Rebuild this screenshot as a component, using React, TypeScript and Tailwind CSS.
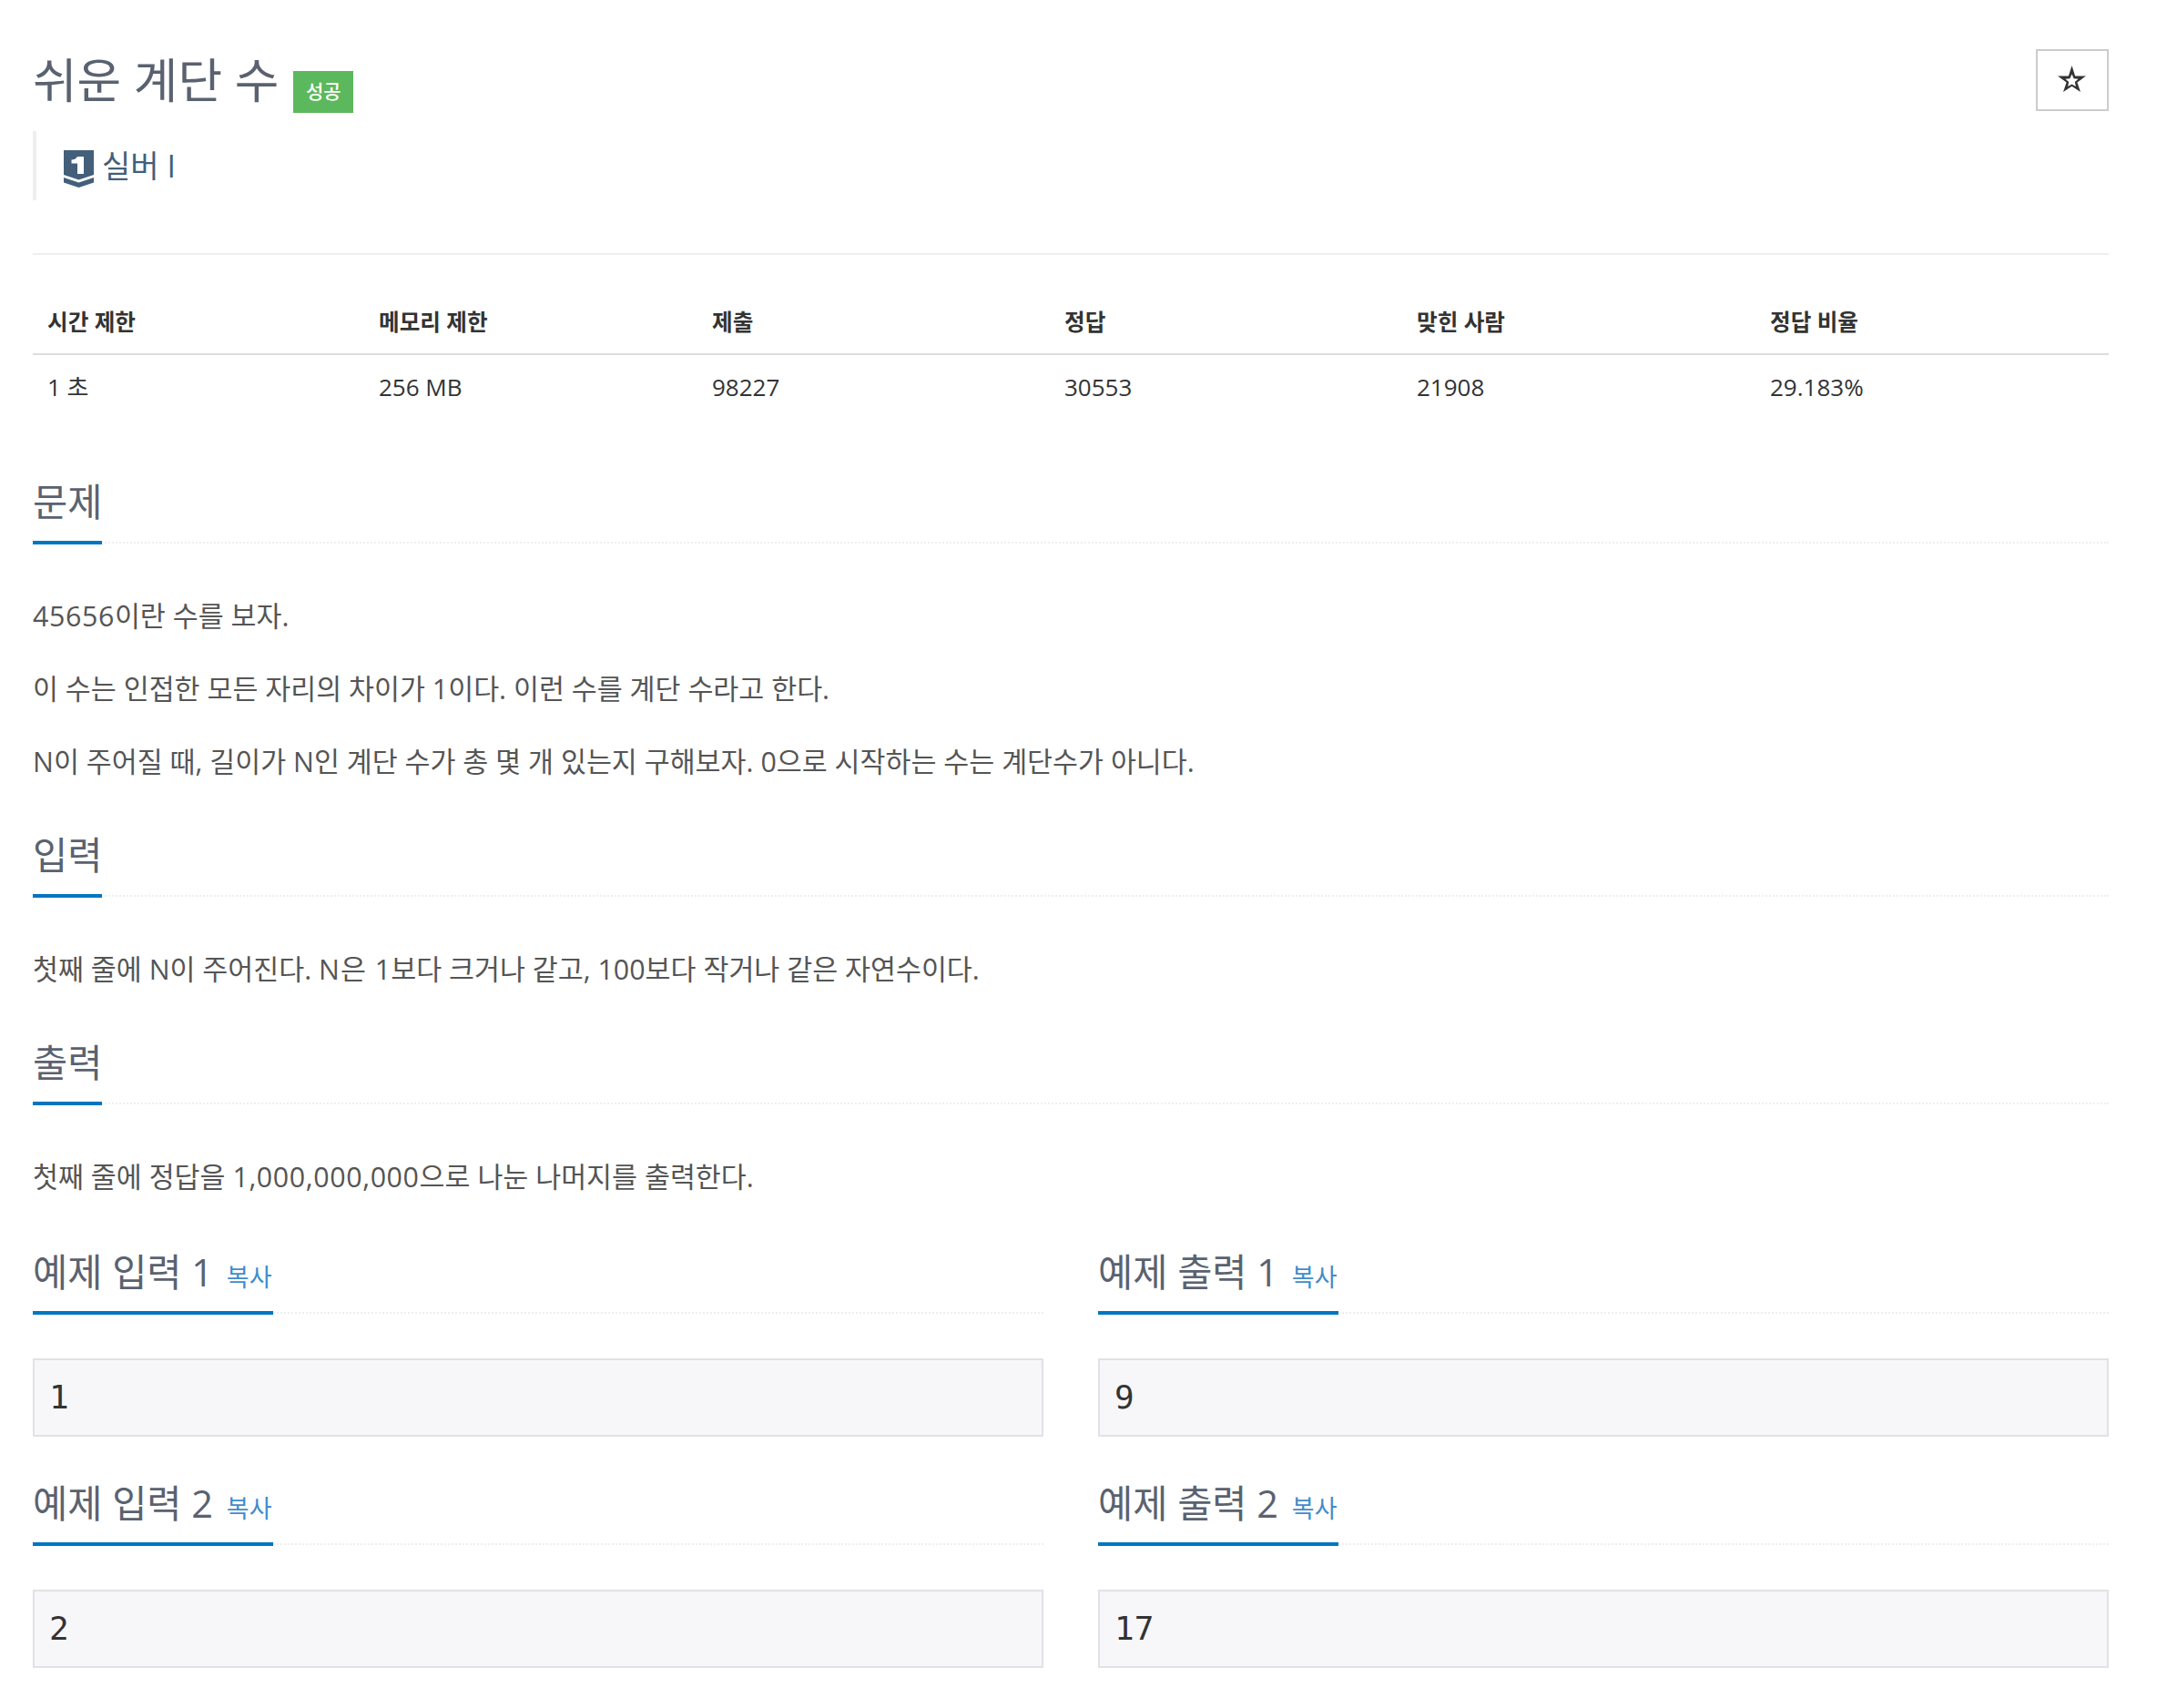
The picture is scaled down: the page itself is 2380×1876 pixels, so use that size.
import React from 'react';

const stats = [
  { head: '시간 제한', value: '1 초' },
  { head: '메모리 제한', value: '256 MB' },
  { head: '제출', value: '98227' },
  { head: '정답', value: '30553' },
  { head: '맞힌 사람', value: '21908' },
  { head: '정답 비율', value: '29.183%' },
];

const Headline: React.FC<{ children: React.ReactNode; className?: string }> = ({ children, className = '' }) => (
  <div className={`h-[72px] border-b-2 border-dotted border-[#eeeeee] ${className}`}>
    <h2 className="inline-block h-[73px] border-b-4 border-[#0076c0] text-[41.500px] leading-[52px] font-normal text-[#5a6270]">
      {children}
    </h2>
  </div>
);

const Sample: React.FC<{ title: string; value: string }> = ({ title, value }) => (
  <div>
    <Headline>
      {title} <a className="mr-[2px] ml-[4px] text-[27px] text-[#428bca]">복사</a>
    </Headline>
    <pre className="mt-[49px] flex h-[86px] items-center border-2 border-[#e1e1e8] bg-[#f7f7f9] pl-[16px] font-['DejaVu_Sans_Mono','Liberation_Mono',monospace] text-[36px] text-[#333333]">
      {value}
    </pre>
  </div>
);

export default function App() {
  return (
    <div className="min-h-[1876px] bg-white pt-[54px] pr-[64px] pl-[36px] font-['Open_Sans','Noto_Sans_CJK_KR',sans-serif] text-[30.400px] text-[#555555]">
      <div className="flex h-[90px] items-start justify-between">
        <div className="flex items-start">
          <h1 className="text-[52.800px] leading-[68px] font-normal text-[#5a6270]">쉬운 계단 수</h1>
          <span className="mt-[24px] ml-[16px] flex h-[46px] w-[66px] items-center justify-center bg-[#5cb85c] text-[21px] font-medium text-white">
            성공
          </span>
        </div>
        <button className="flex h-[68px] w-[80px] items-center justify-center border-2 border-[#cccccc] bg-white">
          <svg width="31" height="29" viewBox="0 0 31 29" className="-mt-[3px] -ml-[2px]">
            <path
              fillRule="evenodd"
              fill="#333333"
              d="M15.500 0l3.600 11.500H31l-9.600 6.900L25 29l-9.500-6.300L6 29l3.600-10.600L0 11.500h11.900zM15.500 9.500l-2.100 4.700-5 .5 3.800 3.400-1.100 4.900 4.400-2.500 4.400 2.500-1.100-4.900 3.800-3.400-5-.5z"
            />
          </svg>
        </button>
      </div>

      <blockquote className="flex h-[76px] items-start border-l-4 border-[#eeeeee] pt-[21px] pl-[30px]">
        <svg width="33" height="41" viewBox="0 0 33 41" className="shrink-0">
          <path d="M0 0h33v27l-16.500 5.500L0 27z" fill="#435f7a" />
          <path d="M0 30l16.500 5.500L33 30v5.500L16.500 41 0 35.500z" fill="#435f7a" />
          <path d="M15 7h7v19h-7V14.500H8.500v-4c3 0 5-1 6.500-3.500z" fill="#ffffff" />
        </svg>
        <span className="-mt-[3px] ml-[9px] text-[34px] leading-[40px] text-[#435f7a]">실버 I</span>
      </blockquote>

      <div className="mt-[58px] h-[2px] bg-[#eeeeee]" />

      <div className="mt-[54px] grid grid-cols-[364px_366px_387px_387px_388px_388px] border-b-2 border-[#dddddd] pb-[14px] text-[24.600px] leading-[40px] font-bold text-[#333333]">
        {stats.map(s => (
          <div key={s.head} className="pl-[16px]">{s.head}</div>
        ))}
      </div>
      <div className="mt-[15px] grid grid-cols-[364px_366px_387px_387px_388px_388px] text-[26px] leading-[40px] text-[#333333]">
        {stats.map(s => (
          <div key={s.head} className="pl-[16px]">{s.value}</div>
        ))}
      </div>

      <Headline className="mt-[80px]">문제</Headline>
      <div className="mt-[60px] leading-[40px]">
        <p><span className="tracking-[0.600px]">45656</span>이란 수를 보자.</p>
        <p className="mt-[40px]">이 수는 인접한 모든 자리의 차이가 1이다. 이런 수를 계단 수라고 한다.</p>
        <p className="mt-[40px]">N이 주어질 때, 길이가 N인 계단 수가 총 몇 개 있는지 구해보자. 0으로 시작하는 수는 계단수가 아니다.</p>
      </div>

      <Headline className="mt-[56px]">입력</Headline>
      <p className="mt-[60px] leading-[40px]">
        첫째 줄에 N이 주어진다. <span className="tracking-[1px]">N은 </span>1보다 크거나 같고, 100보다 작거나 같은 자연수이다.
      </p>

      <Headline className="mt-[56px]">출력</Headline>
      <p className="mt-[60px] leading-[40px]">
        첫째 줄에 정답을 <span className="tracking-[0.600px]">1,000,000,000</span>으로 나눈 나머지를 출력한다.
      </p>

      <div className="mt-[58px] grid grid-cols-2 gap-x-[60px] gap-y-[47px]">
        <Sample title="예제 입력 1" value="1" />
        <Sample title="예제 출력 1" value="9" />
        <Sample title="예제 입력 2" value="2" />
        <Sample title="예제 출력 2" value="17" />
      </div>
    </div>
  );
}
